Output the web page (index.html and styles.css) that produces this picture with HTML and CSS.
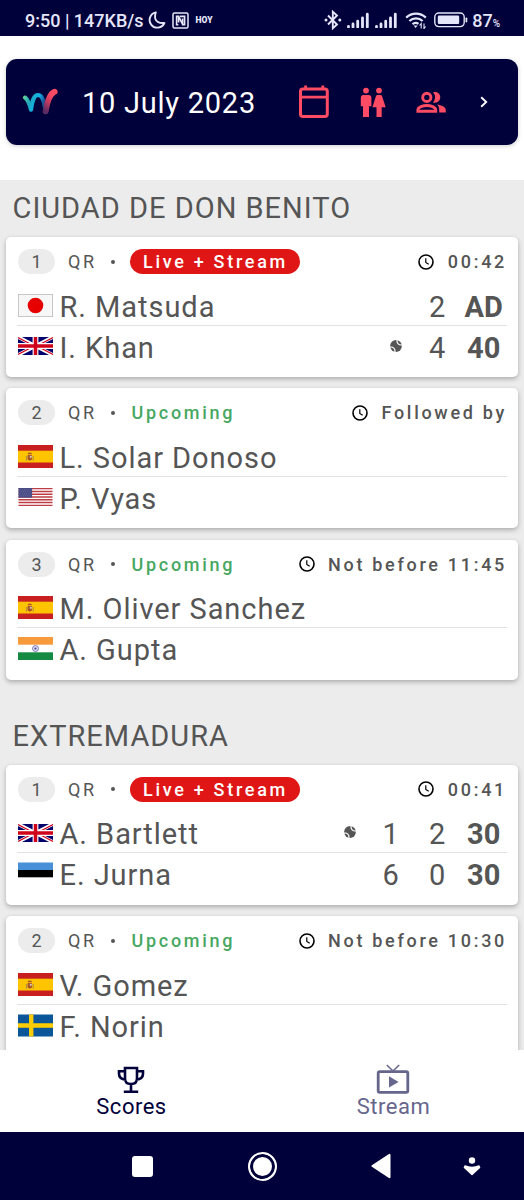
FILE: index.html
```
<!DOCTYPE html>
<html lang="en">

<head>
    <meta charset="UTF-8">
    <meta name="viewport" content="width=device-width, initial-scale=1.0">
    <title>Scores</title>
    <link rel="stylesheet" href="styles.css">
</head>

<body>
    <!-- shared icons and flags -->
    <svg class="sprite" xmlns="http://www.w3.org/2000/svg">
        <defs>
            <linearGradient id="logo-left" x1="0" y1="0" x2="1" y2="0.3">
                <stop offset="0" stop-color="#5fd39a" />
                <stop offset="0.3" stop-color="#1fa5bc" />
                <stop offset="0.65" stop-color="#12b4e6" />
                <stop offset="1" stop-color="#1a4f96" />
            </linearGradient>
            <linearGradient id="logo-right" x1="0" y1="1" x2="0.4" y2="0">
                <stop offset="0" stop-color="#5a2c62" />
                <stop offset="0.6" stop-color="#d23c5e" />
                <stop offset="1" stop-color="#ff4a66" />
            </linearGradient>
        </defs>
        <symbol id="clock" viewBox="0 0 16 16">
            <circle cx="8" cy="8" r="7" fill="none" stroke="#000" stroke-width="1.6" />
            <path d="M7.8 4.2v4.2l2.9 1.8" fill="none" stroke="#000" stroke-width="1.2" />
        </symbol>
        <symbol id="ball" viewBox="0 0 12 12">
            <circle cx="6" cy="6" r="5.9" fill="#555" />
            <circle cx="11" cy="1" r="4" fill="none" stroke="#fff" stroke-width="1.2" />
            <circle cx="1" cy="11" r="4" fill="none" stroke="#fff" stroke-width="1.2" />
        </symbol>
        <symbol id="bars" viewBox="0 0 23 16">
            <path d="M1.5 15v-0.5M6 15v-3M10.700 15V9.200M15.500 15V5.800M20.300 15V2.200" stroke="#e6e6fa" stroke-width="2.8" stroke-linecap="round" />
        </symbol>
        <symbol id="flag-jp" viewBox="0 0 35 23">
            <rect x="0.4" y="0.4" width="34.2" height="22.2" fill="#f7f7f7" stroke="#bbb" stroke-width="0.8" />
            <circle cx="17.5" cy="11.5" r="7.8" fill="#e60000" />
        </symbol>
        <symbol id="flag-gb" viewBox="0 0 60 30" preserveAspectRatio="none">
            <rect width="60" height="30" fill="#00006c" />
            <path d="M0 0l60 30M60 0L0 30" stroke="#fff" stroke-width="6" />
            <path d="M0 1l27 13.5M60 1L33 14.5M0 29l27-13.5M60 29L33 15.5" stroke="#d0021b" stroke-width="2" />
            <path d="M30 0v30M0 15h60" stroke="#fff" stroke-width="10" />
            <path d="M30 0v30M0 15h60" stroke="#d0021b" stroke-width="6" />
        </symbol>
        <symbol id="flag-es" viewBox="0 0 35 23">
            <rect width="35" height="23" fill="#c82020" />
            <rect y="5.7" width="35" height="11.8" fill="#ffc400" />
            <path d="M8.4 11v4.6M15.2 11v4.6" stroke="#a88a4c" stroke-width="1" />
            <path d="M9.6 10h4.4v4.4l-2.2 1.4-2.2-1.4z" fill="#a8532a" />
            <rect x="11.8" y="10.8" width="2" height="1.9" fill="#d5c8b8" />
            <path d="M10 9q1.800-1.600 3.600 0" fill="none" stroke="#b0552a" stroke-width="1.3" />
        </symbol>
        <symbol id="flag-us" viewBox="0 0 35 18.5">
            <rect width="35" height="18.5" fill="#fff" />
            <path d="M0 .7h35M0 3.55h35M0 6.4h35M0 9.25h35M0 12.1h35M0 14.95h35M0 17.8h35" stroke="#bd3d44" stroke-width="1.42" />
            <rect width="14" height="9.9" fill="#484a85" />
            <path d="M1.2 1.8h12M2.3 3.9h10.6M1.2 6h12M2.3 8.1h10.6" stroke="#9395ba" stroke-width="0.7" stroke-dasharray="0.8 1.5" />
        </symbol>
        <symbol id="flag-in" viewBox="0 0 35 23">
            <rect width="35" height="23" fill="#fff" />
            <rect width="35" height="7.7" fill="#f79a3c" />
            <rect y="15.3" width="35" height="7.7" fill="#158a43" />
            <circle cx="17.5" cy="11.5" r="3" fill="#dcdcf2" stroke="#6465ae" stroke-width="0.8" />
            <circle cx="17.5" cy="11.5" r="1.1" fill="#45468f" />
        </symbol>
        <symbol id="flag-ee" viewBox="0 0 35 22">
            <rect width="35" height="22" fill="#fff" />
            <rect width="35" height="7.5" fill="#4891d9" />
            <rect y="7.5" width="35" height="7.3" fill="#000" />
        </symbol>
        <symbol id="flag-se" viewBox="0 0 35 22">
            <rect width="35" height="22" fill="#0b5698" />
            <path d="M13.2 0v22M0 11h35" stroke="#fc0" stroke-width="4.4" />
        </symbol>
    </svg>

    <div class="phone">
        <div class="status-bar">
            <div class="status-left">
                <span>9:50 | 147KB/s</span>
                <svg class="moon" width="18" height="18" viewBox="0 0 18 18">
                    <path d="M7.800 1.400A7.700 7.700 0 1 0 16.400 12Q9 12.600 7.400 8Q6.600 4.600 7.800 1.400z" fill="none" stroke="#e6e6fa" stroke-width="1.9" stroke-linejoin="round" />
                </svg>
                <svg class="nfc" width="17" height="17" viewBox="0 0 17 17">
                    <rect x="1" y="1" width="15" height="15" rx="1.5" fill="none" stroke="#e6e6fa" stroke-width="1.5" />
                    <path d="M6.400 12.800H4.600V4.400h2l4 8M8 4.400h4.600v8.200h-2V6.500M6.600 4.400v6.200" fill="none" stroke="#e6e6fa" stroke-width="1.6" />
                </svg>
                <span class="hoy">HOY</span>
            </div>
            <div class="status-right">
                <svg class="bluetooth" width="18" height="20" viewBox="0 0 18 20">
                    <path d="M4 5.500l9 9-4.200 3.800V1.700L13 5.500l-9 9" fill="none" stroke="#e6e6fa" stroke-width="1.9" />
                    <circle cx="2" cy="10" r="1.500" fill="#e6e6fa" />
                    <circle cx="15.800" cy="10" r="1.500" fill="#e6e6fa" />
                </svg>
                <svg class="signal" width="23" height="16"><use href="#bars" /></svg>
                <svg class="signal" width="23" height="16"><use href="#bars" /></svg>
                <svg class="wifi" width="22" height="17" viewBox="0 0 22 17">
                    <path d="M1.200 5.600a14 14 0 0 1 19.600 0M4.400 9a9.500 9.500 0 0 1 13.200 0M7.500 12.200a5 5 0 0 1 6-.4" fill="none" stroke="#e6e6fa" stroke-width="2.200" />
                    <path d="M8.600 13.600h4L10.600 16z" fill="#e6e6fa" />
                    <path d="M16.200 16.500v-5l-1.600 2M19 11.500v5l1.600-2" fill="none" stroke="#e6e6fa" stroke-width="1.100" />
                </svg>
                <svg class="battery" width="34" height="16" viewBox="0 0 34 16">
                    <rect x="0.800" y="1" width="29.400" height="13.600" rx="4" fill="none" stroke="#e6e6fa" stroke-width="1.400" />
                    <rect x="3.800" y="3.600" width="21.400" height="8.400" rx="1.300" fill="#e6e6fa" />
                    <rect x="31.500" y="5.400" width="1.800" height="5" rx="0.900" fill="#e6e6fa" />
                </svg>
                <span>87<span class="percent">%</span></span>
            </div>
        </div>

        <div class="top">
            <div class="date-bar">
                <svg class="logo" width="38" height="30" viewBox="0 0 38 30">
                    <path d="M4 10.600C7.200 12.800 8.600 17.500 10 22.600C11.400 13 13 8 17 8C21.500 8 23 14 24 21" fill="none" stroke="url(#logo-left)" stroke-width="4.200" stroke-linecap="round" stroke-linejoin="round" />
                    <path d="M33.700 4.700C28.600 7 26.400 14 24.600 24.400" fill="none" stroke="url(#logo-right)" stroke-width="5.800" stroke-linecap="round" />
                </svg>
                <span class="date">10 July 2023</span>
                <svg class="calendar" width="30" height="34" viewBox="0 0 30 34">
                    <rect x="1.500" y="4" width="26.800" height="27.400" rx="2.400" fill="none" stroke="#ff4b63" stroke-width="3" />
                    <path d="M1.500 12.200h27M6.600 0.600v4M23.800 0.600v4" stroke="#ff4b63" stroke-width="2.800" />
                </svg>
                <svg class="people" width="26" height="31" viewBox="0 0 26 31">
                    <g fill="#ff4b63">
                        <circle cx="6" cy="3.600" r="2.900" />
                        <circle cx="19" cy="3.600" r="2.900" />
                        <path d="M3.400 8h5.200a2.800 2.800 0 0 1 2.800 2.800v8.400H9V30H3V19.200H.8v-8.400A2.800 2.800 0 0 1 3.400 8z" />
                        <path d="M17.600 8h2.800q1.300 0 1.700 1.200l3.600 11.100h-4V30h-5.200v-9.700h-4.100L15.900 9.200Q16.300 8 17.600 8z" />
                    </g>
                </svg>
                <svg class="players" width="32" height="24" viewBox="0 0 32 24">
                    <circle cx="11.800" cy="7.400" r="4.100" fill="none" stroke="#ff4b63" stroke-width="2.900" />
                    <path d="M2.900 21.200v-1.400c0-2.600 5.200-4.300 8.900-4.300s8.900 1.700 8.900 4.300v1.400z" fill="none" stroke="#ff4b63" stroke-width="2.900" />
                    <path d="M18 12.400a7.200 7.200 0 0 0 0-10.100c4-1.400 7.300 1.400 7.300 5S22 13.800 18 12.400zM22.200 14.600c4 .6 8.600 2.400 8.600 5.400v2.500h-6.600V20c0-2.200-.6-3.900-2-5.400z" fill="#ff4b63" />
                </svg>
                <svg class="chevron" width="8" height="12" viewBox="0 0 8 12">
                    <path d="M1.200 1.200L6.200 6l-5 4.800" fill="none" stroke="#fff" stroke-width="1.900" />
                </svg>
            </div>
        </div>

        <div class="content">
            <h2 class="tournament">CIUDAD DE DON BENITO</h2>

            <div class="match">
                <div class="match-header">
                    <span class="number">1</span>
                    <span class="round">QR</span>
                    <span class="dot"></span>
                    <span class="live">Live + Stream</span>
                    <svg class="clock"><use href="#clock" /></svg>
                    <span class="time">00:42</span>
                </div>
                <div class="player">
                    <svg class="flag"><use href="#flag-jp" /></svg>
                    <span class="name">R. Matsuda</span>
                    <span class="set">2</span>
                    <span class="points">AD</span>
                </div>
                <div class="player">
                    <svg class="flag flag-wide"><use href="#flag-gb" /></svg>
                    <span class="name">I. Khan</span>
                    <svg class="serve"><use href="#ball" /></svg>
                    <span class="set">4</span>
                    <span class="points">40</span>
                </div>
            </div>

            <div class="match">
                <div class="match-header">
                    <span class="number">2</span>
                    <span class="round">QR</span>
                    <span class="dot"></span>
                    <span class="upcoming">Upcoming</span>
                    <svg class="clock"><use href="#clock" /></svg>
                    <span class="time">Followed by</span>
                </div>
                <div class="player">
                    <svg class="flag"><use href="#flag-es" /></svg>
                    <span class="name">L. Solar Donoso</span>
                </div>
                <div class="player">
                    <svg class="flag flag-wide"><use href="#flag-us" /></svg>
                    <span class="name">P. Vyas</span>
                </div>
            </div>

            <div class="match">
                <div class="match-header">
                    <span class="number">3</span>
                    <span class="round">QR</span>
                    <span class="dot"></span>
                    <span class="upcoming">Upcoming</span>
                    <svg class="clock"><use href="#clock" /></svg>
                    <span class="time">Not before 11:45</span>
                </div>
                <div class="player">
                    <svg class="flag"><use href="#flag-es" /></svg>
                    <span class="name">M. Oliver Sanchez</span>
                </div>
                <div class="player">
                    <svg class="flag"><use href="#flag-in" /></svg>
                    <span class="name">A. Gupta</span>
                </div>
            </div>

            <h2 class="tournament second">EXTREMADURA</h2>

            <div class="match">
                <div class="match-header">
                    <span class="number">1</span>
                    <span class="round">QR</span>
                    <span class="dot"></span>
                    <span class="live">Live + Stream</span>
                    <svg class="clock"><use href="#clock" /></svg>
                    <span class="time">00:41</span>
                </div>
                <div class="player">
                    <svg class="flag flag-wide"><use href="#flag-gb" /></svg>
                    <span class="name">A. Bartlett</span>
                    <svg class="serve"><use href="#ball" /></svg>
                    <span class="set">1</span>
                    <span class="set">2</span>
                    <span class="points">30</span>
                </div>
                <div class="player">
                    <svg class="flag"><use href="#flag-ee" /></svg>
                    <span class="name">E. Jurna</span>
                    <span class="set">6</span>
                    <span class="set">0</span>
                    <span class="points">30</span>
                </div>
            </div>

            <div class="match">
                <div class="match-header">
                    <span class="number">2</span>
                    <span class="round">QR</span>
                    <span class="dot"></span>
                    <span class="upcoming">Upcoming</span>
                    <svg class="clock"><use href="#clock" /></svg>
                    <span class="time">Not before 10:30</span>
                </div>
                <div class="player">
                    <svg class="flag"><use href="#flag-es" /></svg>
                    <span class="name">V. Gomez</span>
                </div>
                <div class="player">
                    <svg class="flag"><use href="#flag-se" /></svg>
                    <span class="name">F. Norin</span>
                </div>
            </div>
        </div>

        <div class="tabs">
            <div class="tab active">
                <svg width="28" height="28" viewBox="0 0 28 28">
                    <path d="M8 2h12v10.500q0 5.500-6 5.500t-6-5.500zM8 5.200H2v2.600q0 5.200 6.800 6M20 5.200h6v2.600q0 5.200-6.800 6M14 18v8M6.800 25.800h14.400" fill="none" stroke="#00003a" stroke-width="2.600" />
                </svg>
                <span>Scores</span>
            </div>
            <div class="tab">
                <svg width="34" height="30" viewBox="0 0 34 30">
                    <rect x="2.200" y="7.600" width="29.600" height="20.800" rx="1.600" fill="none" stroke="#66668c" stroke-width="2.800" />
                    <path d="M10.800 1l6.200 6 6.200-6" fill="none" stroke="#66668c" stroke-width="1.500" />
                    <path d="M13 12.200l9.600 5.700L13 23.600z" fill="#66668c" />
                </svg>
                <span>Stream</span>
            </div>
        </div>

        <div class="system-nav">
            <div class="square"></div>
            <div class="home"></div>
            <svg class="back" width="20" height="26" viewBox="0 0 20 26">
                <path d="M18.500 1.800v22.400L1.400 13z" fill="#fff" stroke="#fff" stroke-width="2" stroke-linejoin="round" />
            </svg>
            <svg class="assist" width="18" height="19" viewBox="0 0 18 19">
                <circle cx="9" cy="3.500" r="3.200" fill="#fff" />
                <path d="M2 9q7 3 14 0l.6 1.600L9 17.400 1.400 10.600z" fill="#fff" stroke="#fff" stroke-width="1.400" stroke-linejoin="round" />
            </svg>
        </div>
    </div>
</body>

</html>
```
FILE: styles.css
```
* {
    box-sizing: border-box;
}

body {
    margin: 0;
    font-family: Roboto, Arial, sans-serif;
    color: #555;
}

svg {
    display: block;
    flex-shrink: 0;
}

.sprite {
    position: absolute;
    width: 0;
    height: 0;
}

.phone {
    display: flex;
    flex-direction: column;
    width: 524px;
    height: 1200px;
    overflow: hidden;
    background-color: #fff;
}

/* status bar */
.status-bar {
    display: flex;
    justify-content: space-between;
    height: 36px;
    padding: 4px 24px 0 25px;
    background-color: #00003a;
    color: #e6e6fa;
    font-size: 18px;
    font-weight: 500;
}

.status-left,
.status-right {
    display: flex;
    align-items: center;
    white-space: nowrap;
}

.moon {
    margin-left: 4px;
}

.nfc {
    margin-left: 6px;
}

.hoy {
    margin-left: 7px;
    font-size: 8.5px;
    font-weight: 900;
}

.signal {
    margin-left: 5px;
}

.wifi {
    margin-left: 7px;
}

.battery {
    margin: 0 4px 0 7px;
}

.percent {
    font-size: 10px;
}

/* date bar */
.top {
    height: 144px;
    padding: 23px 6px 0;
}

.date-bar {
    display: flex;
    align-items: center;
    height: 86px;
    padding-left: 15px;
    border-radius: 11px;
    background-color: #00003a;
    box-shadow: 0 1px 4px rgba(0, 0, 0, 0.2);
}

.date {
    width: 179px;
    margin: 2px 38px 0 23px;
    color: #fff;
    font-size: 29px;
    letter-spacing: 0.75px;
    white-space: nowrap;
}

.people {
    margin-left: 31px;
}

.players {
    margin-left: 29px;
}

.chevron {
    margin-left: 33px;
}

/* matches */
.content {
    flex: 1;
    min-height: 0;
    padding: 0 6px;
    overflow: hidden;
    background-color: #ececec;
}

.tournament {
    height: 57px;
    margin: 0;
    padding-left: 6.5px;
    font-size: 29px;
    font-weight: 400;
    line-height: 56px;
    letter-spacing: 1px;
}

.second {
    margin-top: 28px;
}

.match {
    height: 140px;
    margin-bottom: 11.4px;
    padding: 12px 11px 0;
    border-radius: 5px;
    background-color: #fff;
    box-shadow: 0 2px 5px rgba(0, 0, 0, 0.28);
}

.match-header {
    display: flex;
    align-items: center;
    height: 25px;
    margin-bottom: 10.5px;
    font-size: 18px;
    font-weight: 500;
    letter-spacing: 2.7px;
    white-space: nowrap;
}

.number {
    width: 37px;
    height: 25px;
    margin-left: 1px;
    border-radius: 13px;
    background-color: #ececec;
    font-weight: 400;
    line-height: 26px;
    letter-spacing: 0;
    text-align: center;
}

.round {
    width: 43px;
    margin-left: 13px;
    font-weight: 400;
}

.dot {
    width: 4px;
    height: 4px;
    border-radius: 50%;
    background-color: #555;
}

.live {
    width: 170px;
    height: 25px;
    margin-left: 15px;
    padding-left: 13px;
    border-radius: 13px;
    background-color: #e01616;
    color: #fff;
    line-height: 26px;
}

.upcoming {
    margin-left: 16.5px;
    color: #47a861;
}

.clock {
    width: 16px;
    height: 16px;
    margin-left: auto;
}

.time {
    margin-left: 13.5px;
}

.player {
    display: flex;
    align-items: center;
    height: 40px;
}

.player + .player {
    height: 41px;
    border-top: 1px solid #e2e2e2;
}

.flag {
    width: 35px;
    height: 23px;
    margin: 1px 0 0 0.5px;
}

.flag-wide {
    height: 18px;
}

.name {
    flex: 1;
    padding: 4px 0 0 7px;
    font-size: 29px;
    letter-spacing: 0.95px;
    white-space: nowrap;
}

.set,
.points {
    width: 46.5px;
    padding-top: 4px;
    font-size: 29px;
    text-align: center;
}

.points {
    font-weight: 700;
}

.serve {
    width: 12px;
    height: 12px;
    margin-right: 12px;
}

/* bottom tabs */
.tabs {
    display: flex;
    height: 82px;
    background-color: #fff;
}

.tab {
    display: flex;
    flex: 1;
    flex-direction: column;
    align-items: center;
    justify-content: flex-end;
    padding-bottom: 12px;
    color: #66668c;
    font-size: 22px;
    line-height: 26px;
    letter-spacing: 0.5px;
}

.tab span {
    padding-left: 1px;
}

.active {
    color: #00003a;
}

/* android buttons */
.system-nav {
    display: flex;
    align-items: center;
    height: 68px;
    padding-left: 132px;
    background-color: #00003a;
}

.square {
    width: 21px;
    height: 21px;
    border-radius: 3px;
    background-color: #fff;
}

.home {
    width: 29px;
    height: 29px;
    margin-left: 95px;
    border: 2px solid #fff;
    border-radius: 50%;
    background-color: #fff;
    box-shadow: inset 0 0 0 3px #00003a;
}

.back {
    margin-left: 94px;
}

.assist {
    margin-left: 72px;
}
```
